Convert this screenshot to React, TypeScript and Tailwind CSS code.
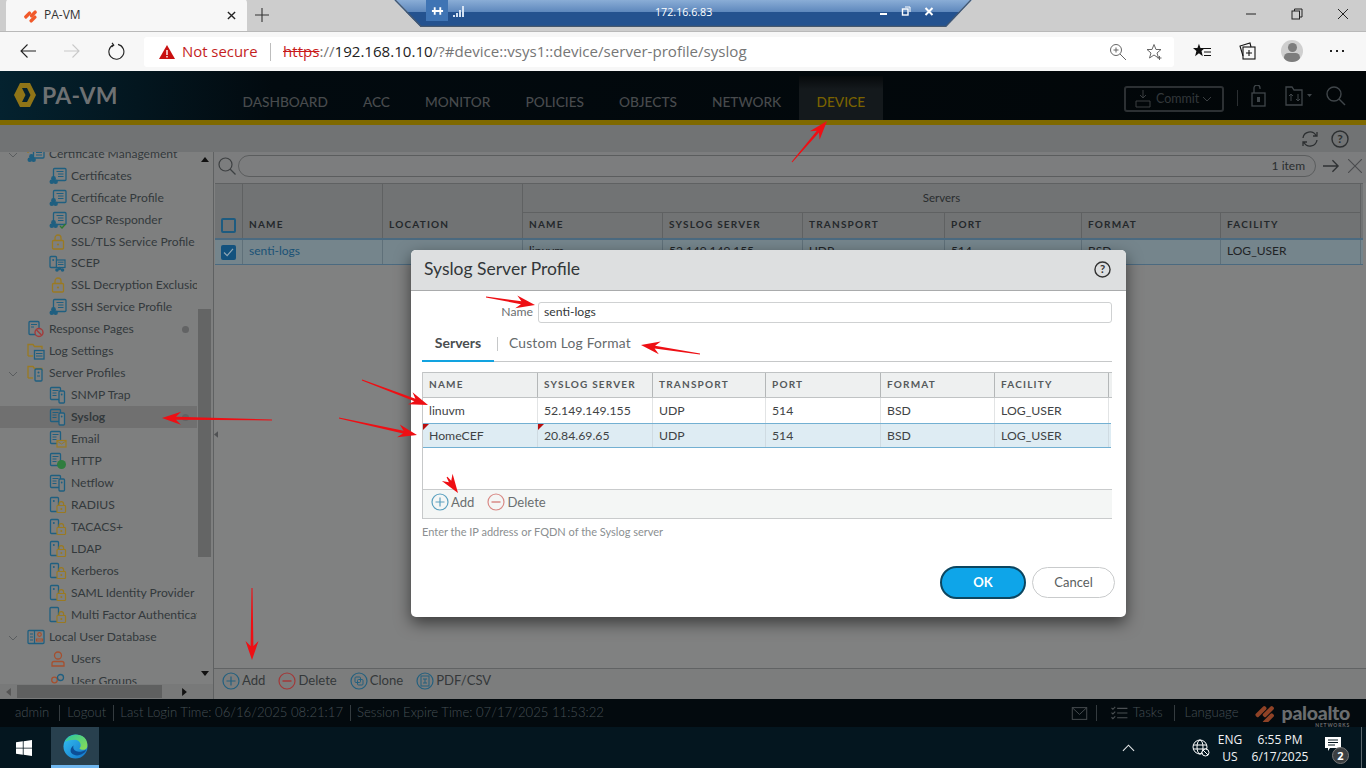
import React from "react";

const lato = "font-['Lato','Open_Sans',sans-serif]";
const segoe = "font-['Open_Sans','Noto_Sans',sans-serif]";

function Arrow({ x1, y1, x2, y2 }: { x1: number; y1: number; x2: number; y2: number }) {
  const a = Math.atan2(y2 - y1, x2 - x1);
  const ux = Math.cos(a), uy = Math.sin(a), nx = -uy, ny = ux;
  const L = 19, W = 6.5, N = 14;
  const b = (d: number, s: number) => `${x2 - ux * d + nx * s},${y2 - uy * d + ny * s}`;
  const t = (s: number) => `${x1 + nx * s},${y1 + ny * s}`;
  const pts = [t(0.5), b(N, 1.4), b(L, W), `${x2},${y2}`, b(L, -W), b(N, -1.4), t(-0.5)].join(" ");
  return <polygon points={pts} fill="#ee0f14" />;
}

const S = ({ c = "w-[18px] h-[18px]", children, vb = "0 0 18 18" }: { c?: string; children: React.ReactNode; vb?: string }) => (
  <svg viewBox={vb} className={`${c} shrink-0`} fill="none">{children}</svg>
);

const blue = "#1f5f80";
const gold = "#9a7a22";
const People = () => (
  <g fill={blue}>
    <circle cx="4.500" cy="11.500" r="2.400" /><circle cx="2.800" cy="14.800" r="2.300" /><circle cx="6.600" cy="14.800" r="2.300" />
  </g>
);
const CertIcon = ({ check }: { check?: boolean }) => (
  <S>
    <rect x="4.500" y="1.500" width="12.500" height="12" rx="1" stroke={blue} strokeWidth="1.300" fill="#7e8080" />
    <path d="M7.500 4.500h7M9 7h5.500M9 9.500h5.500" stroke={blue} strokeWidth="1.200" />
    <People />
    {check && <path d="M11 15l2 2 3.500-4" stroke="#2f7a2f" strokeWidth="1.400" />}
  </S>
);
const GroupCert = () => (
  <S>
    <path d="M1 8V3h5l1.500 1.500h5" stroke={gold} strokeWidth="1.300" />
    <rect x="6.500" y="5" width="10.500" height="8" rx="1" stroke={blue} strokeWidth="1.300" fill="#7e8080" />
    <path d="M9 7.500h6M9 10h6" stroke={blue} />
    <People />
  </S>
);
const LockIcon = () => (
  <S>
    <rect x="3.500" y="7.500" width="11" height="8.500" rx="1" stroke={gold} strokeWidth="1.300" />
    <path d="M6 7.500V5a3 3 0 0 1 6 0v2.500" stroke={gold} strokeWidth="1.300" />
    <circle cx="9" cy="11.500" r="1.100" fill={gold} />
  </S>
);
const ScepIcon = () => (
  <S>
    <rect x="1" y="1.500" width="6.500" height="11" rx="1" stroke={blue} strokeWidth="1.300" />
    <circle cx="4.200" cy="5" r="1" fill={blue} />
    <rect x="7.500" y="5" width="8.500" height="7.500" stroke={blue} strokeWidth="1.200" fill="#7e8080" />
    <path d="M9 7.200h5.500M9 9.500h5.500" stroke={blue} />
    <g fill={blue}><circle cx="10.500" cy="13.500" r="1.800" /><circle cx="13.500" cy="15" r="1.800" /><circle cx="8" cy="15" r="1.800" /></g>
  </S>
);
const ResponseIcon = () => (
  <S>
    <rect x="2" y="1.500" width="10" height="13" rx="1" stroke={blue} strokeWidth="1.300" />
    <path d="M4 4.500h6M4 7h3" stroke={blue} strokeWidth="1.200" />
    <circle cx="12" cy="12.500" r="4" stroke="#a33a3a" strokeWidth="1.400" fill="#7e8080" />
    <path d="M9.500 10l5 5" stroke="#a33a3a" strokeWidth="1.400" />
  </S>
);
const FolderDoc = ({ device }: { device?: boolean }) => (
  <S>
    <path d="M1 14V2.500h5l1.500 2H15V7" stroke={gold} strokeWidth="1.300" />
    <path d="M1 14h5" stroke={gold} strokeWidth="1.300" />
    {device ? (
      <>
        <rect x="8" y="5" width="7" height="12" rx="1" stroke={blue} strokeWidth="1.300" fill="#7e8080" />
        <circle cx="11.500" cy="8.500" r="1" fill={blue} />
        <path d="M10 12h3" stroke={blue} />
      </>
    ) : (
      <>
        <rect x="7.500" y="8.500" width="9.500" height="8.500" stroke={blue} strokeWidth="1.300" fill="#7e8080" />
        <path d="M9 11.500h6.500M9 14h6.500" stroke={blue} />
      </>
    )}
  </S>
);
const ServerDoc = ({ extra }: { extra?: "mail" | "globe" }) => (
  <S>
    <rect x="1.500" y="1.500" width="10" height="12" rx="1" stroke={blue} strokeWidth="1.300" />
    <path d="M3.500 4.500h6M3.500 7h4M3.500 9.500h4" stroke={blue} strokeWidth="1.100" />
    {!extra && (
      <>
        <rect x="10" y="5" width="5.500" height="12" rx="1" stroke={blue} strokeWidth="1.300" fill="#7e8080" />
        <circle cx="12.700" cy="8.500" r=".9" fill={blue} />
      </>
    )}
    {extra === "mail" && (
      <>
        <rect x="8" y="10.500" width="9" height="6.500" stroke={gold} strokeWidth="1.200" fill="#7e8080" />
        <path d="M8 11l4.500 3 4.500-3" stroke={gold} />
      </>
    )}
    {extra === "globe" && <circle cx="12.500" cy="12.500" r="4.500" fill="#2f7d3f" />}
  </S>
);
const ServerLock = ({ phone }: { phone?: boolean }) => (
  <S>
    <rect x={phone ? 1 : 1.500} y="1.500" width={phone ? 8.500 : 8} height="14" rx="1" stroke={blue} strokeWidth="1.300" />
    {!phone && <circle cx="4.800" cy="5" r="1" fill={blue} />}
    <rect x="8" y="9.500" width="8.500" height="7" rx=".8" stroke={gold} strokeWidth="1.200" fill="#7e8080" />
    <path d="M10 9.500V8a2.300 2.300 0 0 1 4.600 0v1.500" stroke={gold} strokeWidth="1.200" />
    <circle cx="12.300" cy="13" r="1" fill={gold} />
  </S>
);
const DbIcon = () => (
  <S>
    <rect x="1" y="2.500" width="16" height="13" rx="1" stroke={blue} strokeWidth="1.300" />
    <path d="M7.500 2.500v13M3 6h3M3 9h3M3 12h3" stroke={blue} strokeWidth="1.200" />
    <circle cx="12.500" cy="6.500" r="1.800" stroke="#a5502f" strokeWidth="1.200" />
    <path d="M9.500 13v-2h6v2z" stroke="#a5502f" strokeWidth="1.200" />
  </S>
);
const UserIcon = () => (
  <S>
    <circle cx="9" cy="5.500" r="3.500" stroke="#a5502f" strokeWidth="1.300" />
    <path d="M3 16v-2.500c0-1.300 1-2 2-2h8c1 0 2 .7 2 2V16z" stroke="#a5502f" strokeWidth="1.300" />
  </S>
);
const GroupIcon = () => (
  <S>
    <circle cx="5.500" cy="8" r="2.800" stroke="#a5502f" strokeWidth="1.300" />
    <circle cx="11.500" cy="5.500" r="3" stroke={blue} strokeWidth="1.300" />
  </S>
);

type Row = { t: string; i: React.ReactNode; top?: boolean; open?: boolean; sel?: boolean; dot?: boolean; short?: boolean };
const rows: Row[] = [
  { t: "Certificate Management", i: <GroupCert />, top: true, open: true },
  { t: "Certificates", i: <CertIcon /> },
  { t: "Certificate Profile", i: <CertIcon /> },
  { t: "OCSP Responder", i: <CertIcon check /> },
  { t: "SSL/TLS Service Profile", i: <LockIcon /> },
  { t: "SCEP", i: <ScepIcon />, short: true },
  { t: "SSL Decryption Exclusion", i: <LockIcon /> },
  { t: "SSH Service Profile", i: <CertIcon /> },
  { t: "Response Pages", i: <ResponseIcon />, top: true, dot: true },
  { t: "Log Settings", i: <FolderDoc />, top: true },
  { t: "Server Profiles", i: <FolderDoc device />, top: true, open: true },
  { t: "SNMP Trap", i: <ServerDoc /> },
  { t: "Syslog", i: <ServerDoc />, sel: true, dot: true },
  { t: "Email", i: <ServerDoc extra="mail" /> },
  { t: "HTTP", i: <ServerDoc extra="globe" /> },
  { t: "Netflow", i: <ServerDoc /> },
  { t: "RADIUS", i: <ServerLock /> },
  { t: "TACACS+", i: <ServerLock /> },
  { t: "LDAP", i: <ServerLock /> },
  { t: "Kerberos", i: <ServerLock /> },
  { t: "SAML Identity Provider", i: <ServerLock /> },
  { t: "Multi Factor Authentication", i: <ServerLock phone /> },
  { t: "Local User Database", i: <DbIcon />, top: true, open: true },
  { t: "Users", i: <UserIcon /> },
  { t: "User Groups", i: <GroupIcon /> },
];

function TreeRow({ r }: { r: Row }) {
  return (
    <div className={`relative ${r.short ? "h-[21px]" : "h-[22px]"} flex items-center overflow-hidden whitespace-nowrap text-[12.100px] text-[#33393c] ${r.sel ? "bg-[#707070] font-bold text-[#1f2326]" : ""} ${r.top ? "pl-[27px]" : "pl-[49px]"}`}>
      {r.open && (
        <svg viewBox="0 0 10 6" className="absolute left-[8px] top-[9px] w-[10px] h-[6px]" fill="none"><path d="M1 1l4 4 4-4" stroke="#5a5d5f" /></svg>
      )}
      {r.i}
      <span className="ml-[4px]">{r.t}</span>
      {r.dot && <span className="absolute left-[182px] top-[8px] w-[7px] h-[7px] rounded-full bg-[#626364]" />}
    </div>
  );
}

const mainCols = "grid grid-cols-[28px_140px_140px_140px_140px_142px_137px_139px_140px]";
const modalCols = "grid grid-cols-[115px_115px_113px_115px_114px_114px]";
const thMain = "h-[25px] flex items-center pb-[2px] pl-[6px] text-[10px] font-bold tracking-[1.200px] text-[#24282b] border-r border-[#5f6162]";
const tdMain = "h-[24px] flex items-center pb-[2px] pl-[6px] text-[12px] text-[#1f2326] border-r border-[#5f7079]";

function BarBtn({ kind, label, dim }: { kind: "add" | "del" | "clone" | "pdf"; label: string; dim?: boolean }) {
  const col = kind === "del" ? (dim ? "#a33838" : "#d98a86") : (dim ? "#23607f" : "#5aa0bf");
  return (
    <div className="flex items-center gap-[2px]">
      <svg viewBox="0 0 18 18" className="w-[18px] h-[18px]" fill="none">
        <circle cx="9" cy="9" r="8" stroke={col} strokeWidth="1.200" />
        {kind === "add" && <path d="M9 4.500v9M4.500 9h9" stroke={col} strokeWidth="1.200" />}
        {kind === "del" && <path d="M4.500 9h9" stroke={col} strokeWidth="1.500" />}
        {kind === "clone" && <><rect x="5" y="5" width="5.500" height="5.500" rx="1" stroke={col} /><rect x="7.500" y="7.500" width="5.500" height="5.500" rx="1" stroke={col} /></>}
        {kind === "pdf" && <><rect x="5" y="4" width="8" height="10" stroke={col} /><path d="M7 7h4M7 11h4M9 7v4" stroke={col} /></>}
      </svg>
      <span>{label}</span>
    </div>
  );
}

const Sep = () => <span className="inline-block align-middle w-px h-[16px] bg-[#343b3f]" />;

export default function App() {
  return (
    <div className={`relative w-[1366px] h-[768px] overflow-hidden flex flex-col bg-[#808181] ${segoe}`}>
      {/* tab strip */}
      <div className="h-[32px] shrink-0 bg-[#cdcdcd] flex items-end pl-[6px] border-b border-[#b9b9b9]">
        <div className="w-[241px] h-[32px] bg-[#f7f7f7] rounded-t-[4px] flex items-center pl-[18px] pr-[11px]">
          <svg viewBox="0 0 16 16" className="w-[15px] h-[15px]"><g fill="#f1592a" transform="rotate(-45 8 8)"><rect x="1" y="3" width="9" height="3.500" rx="1.500" /><rect x="6" y="6.500" width="9" height="3.500" rx="1.500" /><rect x="2" y="10" width="9" height="3.500" rx="1.500" /></g></svg>
          <span className="ml-[5px] text-[12px] text-[#333] flex-1">PA-VM</span>
          <svg viewBox="0 0 10 10" className="w-[9px] h-[9px]" fill="none"><path d="M1 1l8 8M9 1l-8 8" stroke="#222" strokeWidth="1.500" /></svg>
        </div>
        <svg viewBox="0 0 14 14" className="ml-[8px] mb-[9px] w-[14px] h-[14px]" fill="none"><path d="M7 0v14M0 7h14" stroke="#333" strokeWidth="1.100" /></svg>
        <div className="flex-1" />
        <div className="flex mb-[10px] mr-[16px] gap-[32px] items-center">
          <svg viewBox="0 0 14 14" className="w-[14px] h-[14px]" fill="none"><path d="M2 7h10" stroke="#222" /></svg>
          <svg viewBox="0 0 14 14" className="w-[14px] h-[14px]" fill="none"><rect x="2" y="4" width="7.500" height="8" stroke="#222" /><path d="M4.500 4V2h7.500v8H9.500" stroke="#222" /></svg>
          <svg viewBox="0 0 14 14" className="w-[14px] h-[14px]" fill="none"><path d="M2 2l10 10M12 2L2 12" stroke="#222" /></svg>
        </div>
      </div>

      {/* RDP connection bar */}
      <div className="absolute left-[394px] top-0 w-[578px] h-[27px] [clip-path:polygon(0_0,100%_0,95.500%_100%,4.600%_100%)] bg-[linear-gradient(#8aadd6_0%,#5d87bc_45%,#24528f_46%,#24528f_100%)] text-white text-[11px]">
        <svg viewBox="0 0 578 27" className="absolute inset-0 w-[578px] h-[27px]" fill="none"><path d="M1 0l26 26.500h525L577 0" stroke="#46586e" strokeWidth="1.500" /></svg>
        <div className="absolute left-[32px] top-0 w-[22px] h-[21px] bg-[#3f74b4] flex items-center justify-center">
          <svg viewBox="0 0 14 10" className="w-[13px] h-[10px]" fill="none"><path d="M1 5h12M4 1v8M10 1v8" stroke="#fff" strokeWidth="2" /></svg>
        </div>
        <svg viewBox="0 0 12 12" className="absolute left-[59px] top-[5px] w-[12px] h-[12px]"><path d="M0 10h2v2H0zM3 8h2v4H3zM6 5h2v7H6zM9 1h2v11H9z" fill="#d6e3f3" /></svg>
        <span className="absolute left-[261px] top-[4px] text-[10.700px] whitespace-nowrap">172.16.6.83</span>
        <svg viewBox="0 0 54 14" className="absolute left-[486px] top-[3px] w-[54px] h-[14px]" fill="none"><path d="M0 11h7" stroke="#fff" strokeWidth="2" /><rect x="22.500" y="6" width="5.500" height="6" stroke="#fff" strokeWidth="1.400" /><path d="M25 4h5v5" stroke="#fff" /><path d="M45.500 5l7 7M52.500 5l-7 7" stroke="#fff" strokeWidth="2" /></svg>
      </div>

      {/* address bar */}
      <div className="h-[39px] shrink-0 bg-[#f7f7f7] flex items-center relative">
        <svg viewBox="0 0 18 18" className="absolute left-[19px] top-[10px] w-[18px] h-[18px]" fill="none"><path d="M17 9H2M8.500 2.500L2 9l6.500 6.500" stroke="#222" strokeWidth="1.100" /></svg>
        <svg viewBox="0 0 18 18" className="absolute left-[63px] top-[10px] w-[18px] h-[18px]" fill="none"><path d="M1 9h15M9.500 2.500L16 9l-6.500 6.500" stroke="#c9c9c9" strokeWidth="1.100" /></svg>
        <svg viewBox="0 0 18 18" className="absolute left-[107px] top-[10px] w-[18px] h-[18px]" fill="none"><path d="M6.500 2.800A7.500 7.500 0 1 0 11 2.400M5 .8l1.800 2.300L4.500 5" stroke="#222" strokeWidth="1.100" /></svg>

        <div className="ml-[144px] w-[1030px] h-[30px] bg-white rounded-[3px] flex items-center pl-[15px] pr-[10px] whitespace-nowrap">
          <svg viewBox="0 0 16 14" className="w-[16px] h-[14px]"><path d="M8 0l8 14H0z" fill="#c80f0f" /><path d="M7.300 5h1.400v5H7.300zM7.300 11h1.400v1.500H7.300z" fill="#fff" /></svg>
          <span className="ml-[7px] text-[14.900px] text-[#c41e1e] w-[76px]">Not secure</span>
          <span className="ml-[12px] w-px h-[18px] bg-[#bdbdbd]" />
          <span className="ml-[12px] text-[15.100px]">
            <span className="text-[#c81a1a] line-through">https</span><span className="text-[#767676]">://</span><span className="text-[#222]">192.168.10.10</span><span className="text-[#767676]">/?#device::vsys1::device/server-profile/syslog</span>
          </span>
          <span className="flex-1" />
          <svg viewBox="0 0 18 18" className="w-[18px] h-[18px]" fill="none"><circle cx="7" cy="7" r="5.500" stroke="#666" /><path d="M11 11l6 6M7 4.500v5M4.500 7h5" stroke="#666" /></svg>
          <svg viewBox="0 0 18 18" className="ml-[19px] w-[18px] h-[18px]" fill="none"><path d="M8 1.500l2 5h5l-4 3.500 1.500 5L8 12l-4.500 3 1.500-5-4-3.500h5z" stroke="#666" /><path d="M13.500 13v4M11.500 15h4" stroke="#666" /></svg>
        </div>
        <svg viewBox="0 0 18 18" className="absolute left-[1193px] top-[10px] w-[18px] h-[18px]" fill="none"><path d="M7 1l1.800 5H14l-4 3.500 1.500 6L7 12l-4.500 3.500L4 9.500 0 6h5.200z" fill="#111" transform="translate(0 1) scale(.85)" /><path d="M11 6.500h7M11 10h7M11 13.500h7" stroke="#111" /></svg>
        <svg viewBox="0 0 18 18" className="absolute left-[1238px] top-[10px] w-[18px] h-[18px]" fill="none"><rect x="5" y="5" width="12" height="12" stroke="#111" strokeWidth="1.100" /><path d="M5 14L2 4l10-3 1 4M11 8v6M8 11h6" stroke="#111" strokeWidth="1.100" /></svg>
        <div className="absolute left-[1281px] top-[8px] w-[22px] h-[22px] rounded-full bg-[#cfcfcf] overflow-hidden flex flex-col items-center pt-[3px]">
          <span className="w-[9px] h-[9px] rounded-full bg-[#7d7d7d]" />
          <span className="mt-[1px] w-[16px] h-[10px] rounded-full bg-[#7d7d7d]" />
        </div>
        <span className="absolute left-[1330px] top-[18px] flex gap-[4px]"><i className="w-[2px] h-[2px] bg-[#222]" /><i className="w-[2px] h-[2px] bg-[#222]" /><i className="w-[2px] h-[2px] bg-[#222]" /></span>
      </div>

      {/* PAN header */}
      <div className={`h-[49px] shrink-0 bg-[linear-gradient(90deg,#04222f_0%,#020a0f_20%,#020608_100%)] relative flex items-end ${lato}`}>
        <svg viewBox="0 0 22 24" className="absolute left-[14px] top-[12px] w-[22px] h-[24px]"><path fillRule="evenodd" d="M6 0h10l6 12-6 12H6L0 12zM8 5l3.500 7L8 19h5l3.500-7L13 5z" fill="#8f7417" /></svg>
        <span className="absolute left-[42px] top-[7px] text-[23px] font-bold text-[#6e7173] tracking-[0.2px]">PA-VM</span>
        <nav className="ml-[225px] flex text-[13.700px] font-medium text-[#484b4d]">
          {["DASHBOARD", "ACC", "MONITOR", "POLICIES", "OBJECTS", "NETWORK"].map((t) => (
            <span key={t} className="px-[17.500px] h-[35px] flex items-center self-end">{t}</span>
          ))}
          <span className="w-[84px] h-[44px] pt-[9px] bg-[linear-gradient(#06090b,#14191c_30%)] text-[#7a6200] flex items-center justify-center">DEVICE</span>
        </nav>
        <div className="absolute left-[1124px] top-[15px] w-[100px] h-[26px] rounded-[3px] border-2 border-[#2c3033] flex items-center pl-[9px] text-[12.500px] text-[#33383b]">
          <svg viewBox="0 0 16 18" className="w-[16px] h-[18px]" fill="none"><path d="M8 0v8M5 5l3 3 3-3M1 11h14v6H1z" stroke="#3a3e41" /></svg>
          <span className="ml-[5px]">Commit</span>
          <svg viewBox="0 0 8 5" className="ml-[4px] w-[8px] h-[5px]" fill="none"><path d="M0 0l4 4 4-4" stroke="#3a3e41" /></svg>
        </div>
        <span className="absolute left-[1237px] top-[19px] w-px h-[16px] bg-[#2b2f32]" />
        <svg viewBox="0 0 16 22" className="absolute left-[1251px] top-[14px] w-[16px] h-[22px]" fill="none"><rect x="1" y="8" width="13" height="13" stroke="#40464a" strokeWidth="1.300" /><path d="M3 8V3a3 3 0 0 1 6 0v1" stroke="#40464a" strokeWidth="1.300" /><rect x="6" y="12" width="3" height="5" fill="#40464a" /></svg>
        <svg viewBox="0 0 28 20" className="absolute left-[1285px] top-[15px] w-[28px] h-[20px]" fill="none"><path d="M1 19V1h6l2 3h8v15z" stroke="#40464a" strokeWidth="1.300" /><path d="M6 8v7M13 8v7M4 10l2-2 2 2M11 13l2 2 2-2" stroke="#40464a" /><path d="M22 8l2.500 3L27 8z" fill="#40464a" /></svg>
        <svg viewBox="0 0 20 20" className="absolute left-[1326px] top-[15px] w-[20px] h-[20px]" fill="none"><circle cx="8" cy="8" r="7" stroke="#40464a" strokeWidth="1.400" /><path d="M13 13l6 6" stroke="#40464a" strokeWidth="1.400" /></svg>
      </div>
      <div className="h-[5px] shrink-0 bg-[#7f6900]" />

      {/* toolbar */}
      <div className="h-[27px] shrink-0 bg-[#717374] flex items-center justify-end pr-[17px] gap-[12px]">
        <svg viewBox="0 0 18 18" className="w-[18px] h-[18px]" fill="none"><path d="M2 8a7 7 0 0 1 13-2.500M16 10a7 7 0 0 1-13 2.500M12 6h4V2M6 12H2v4" stroke="#2c2f31" strokeWidth="1.300" /></svg>
        <svg viewBox="0 0 18 18" className="w-[18px] h-[18px]" fill="none"><circle cx="9" cy="9" r="8" stroke="#2c2f31" strokeWidth="1.400" /><text x="9" y="13.200" textAnchor="middle" fontSize="12" fontWeight="700" fill="#2c2f31" fontFamily="Lato">?</text></svg>
      </div>

      {/* body */}
      <div className={`flex-1 min-h-0 flex ${lato}`}>
        {/* sidebar */}
        <aside className="w-[214px] shrink-0 flex flex-col bg-[#7e7f7f] border-r border-[#5f6162]">
          <div className="flex-1 min-h-0 flex">
            <div className="w-[197px] overflow-hidden">
              <div className="-mt-[9px]">
                {rows.map((r) => <TreeRow key={r.t} r={r} />)}
              </div>
            </div>
            <div className="w-[16px] flex flex-col items-center relative">
              <svg viewBox="0 0 10 6" className="mt-[5px] w-[8px] h-[5px]"><path d="M0 6l5-6 5 6z" fill="#111" /></svg>
              <div className="mt-[147px] ml-[-1px] w-[13px] h-[248px] bg-[#646565]" />
              <div className="flex-1" />
              <svg viewBox="0 0 10 6" className="mb-[8px] w-[8px] h-[5px]"><path d="M0 0l5 6 5-6z" fill="#111" /></svg>
            </div>
          </div>
          <div className="h-[15px] shrink-0 bg-[#787979] flex items-center pl-[6px] relative">
            <svg viewBox="0 0 6 10" className="w-[5px] h-[8px]"><path d="M6 0L0 5l6 5z" fill="#555" /></svg>
            <div className="ml-[6px] w-[145px] h-[13px] bg-[#5f6060]" />
            <svg viewBox="0 0 6 10" className="ml-[20px] w-[5px] h-[8px]"><path d="M0 0l6 5-6 5z" fill="#111" /></svg>
          </div>
        </aside>

        {/* content */}
        <main className="flex-1 min-w-0 flex flex-col relative">
          <svg viewBox="0 0 5 8" className="absolute left-[0px] top-[279px] w-[4px] h-[7px]"><path d="M5 0L0 4l5 4z" fill="#4f5153" /></svg>
          <div className="h-[31px] shrink-0 flex items-start pt-[3px] pl-[4px] bg-[#7c7d7e]">
            <svg viewBox="0 0 18 18" className="mt-[2px] w-[18px] h-[18px]" fill="none"><circle cx="7.500" cy="7.500" r="6.500" stroke="#3d4042" strokeWidth="1.200" /><path d="M12 12l5.500 5.500" stroke="#3d4042" strokeWidth="1.200" /></svg>
            <div className="ml-[2px] w-[1078px] h-[22px] rounded-full border border-[#5b5d5e] flex items-center justify-end pr-[10px] text-[12px] text-[#2a2d2f]">1 item</div>
            <svg viewBox="0 0 18 14" className="ml-[7px] mt-[4px] w-[17px] h-[14px]" fill="none"><path d="M0 7h16M10 1l6 6-6 6" stroke="#2f3234" strokeWidth="1.400" /></svg>
            <svg viewBox="0 0 14 14" className="ml-[8px] mt-[4px] w-[14px] h-[14px]" fill="none"><path d="M0 0l14 14M14 0L0 14" stroke="#4a4c4e" strokeWidth="1.100" /></svg>
          </div>

          {/* table */}
          <div className="w-[1148px] ml-[1px] border-t border-[#5f6162] bg-[#717374]">
            <div className={mainCols}>
              <div className="h-[29px] border-r border-[#5f6162]" />
              <div className="h-[29px] border-r border-[#5f6162]" />
              <div className="h-[29px] border-r border-[#5f6162]" />
              <div className="col-span-6 h-[29px] border-b border-r border-[#5f6162] flex items-center justify-center text-[11.500px] text-[#2a2d2f]">Servers</div>
              <div className="h-[25px] border-r border-[#5f6162] flex items-center justify-center">
                <span className="w-[15px] h-[15px] border-2 border-[#1d5b80] rounded-[2px]" />
              </div>
              {["NAME", "LOCATION", "NAME", "SYSLOG SERVER", "TRANSPORT", "PORT", "FORMAT", "FACILITY"].map((t, i) => (
                <div key={i} className={thMain}>{t}</div>
              ))}
            </div>
            <div className={`${mainCols} border-t-2 border-b border-t-[#4b6a80] border-b-[#4b6a80] bg-[#75858c]`}>
              <div className="h-[24px] flex items-center justify-center border-r border-[#5f7079]">
                <span className="w-[15px] h-[15px] rounded-[2px] bg-[#13527e] flex items-center justify-center">
                  <svg viewBox="0 0 12 10" className="w-[11px] h-[9px]" fill="none"><path d="M1 5l3.500 3.500L11 1" stroke="#8fa6b5" strokeWidth="1.300" /></svg>
                </span>
              </div>
              <div className={`${tdMain} !text-[#1a5276]`}>senti-logs</div>
              <div className={tdMain} />
              <div className={tdMain}>linuvm</div>
              <div className={tdMain}>52.149.149.155</div>
              <div className={tdMain}>UDP</div>
              <div className={tdMain}>514</div>
              <div className={tdMain}>BSD</div>
              <div className={tdMain}>LOG_USER</div>
            </div>
          </div>

          <div className="flex-1" />
          {/* bottom bar */}
          <div className="h-[31px] shrink-0 border-t border-[#616364] bg-[#7c7d7d] flex items-center pb-[6px] pl-[8px] gap-[13px] text-[13.100px] text-[#34383a]">
            <BarBtn kind="add" label="Add" dim />
            <BarBtn kind="del" label="Delete" dim />
            <BarBtn kind="clone" label="Clone" dim />
            <BarBtn kind="pdf" label="PDF/CSV" dim />
          </div>
        </main>
      </div>

      {/* status bar */}
      <footer className={`h-[28px] shrink-0 bg-[#030a0e] flex items-center pl-[15px] text-[13.150px] font-light text-[#465055] whitespace-nowrap relative ${lato}`}>
        <span>admin</span>
        <span className="ml-[10px] flex"><Sep /></span>
        <span className="ml-[7px]">Logout</span>
        <span className="ml-[7px] flex"><Sep /></span>
        <span className="ml-[6px]">Last Login Time: 06/16/2025 08:21:17</span>
        <span className="ml-[7px] flex"><Sep /></span>
        <span className="ml-[6px]">Session Expire Time: 07/17/2025 11:53:22</span>
        <span className="flex-1" />
        <svg viewBox="0 0 17 14" className="w-[17px] h-[13px]" fill="none"><rect x=".7" y=".7" width="15.600" height="12.600" stroke="#4b5053" /><path d="M1 1l7.500 7L16 1" stroke="#4b5053" /></svg>
        <span className="ml-[8px] flex"><Sep /></span>
        <svg viewBox="0 0 18 16" className="ml-[13px] w-[18px] h-[15px]" fill="none"><path d="M1 2l1.500 1.500L5 1M1 7l1.500 1.500L5 6M1 12l1.500 1.500L5 11M7 2.500h11M7 7.500h11M7 12.500h11" stroke="#4b5053" strokeWidth="1.200" /></svg>
        <span className="ml-[5px]">Tasks</span>
        <span className="ml-[11px] flex"><Sep /></span>
        <span className="ml-[10px]">Language</span>
        <svg viewBox="0 0 24 16" className="ml-[15px] w-[25px] h-[17px]"><g fill="#8f4226" transform="rotate(-45 12 8)"><rect x="3" y="1" width="13" height="4" rx="1.500" /><rect x="8" y="6" width="13" height="4" rx="1.500" /><rect x="3" y="11" width="13" height="4" rx="1.500" /></g></svg>
        <span className="ml-[3px] mr-[16px] -mt-[1px] relative text-[19.500px] font-black tracking-[-0.3px] leading-none text-[#6a6d6f]">
          paloalto
          <span className="absolute right-0 -bottom-[6px] text-[5px] tracking-[0.8px] font-bold">NETWORKS</span>
        </span>
      </footer>

      {/* taskbar */}
      <div className="h-[41px] shrink-0 bg-[#04161f] flex items-center relative text-white">
        <svg viewBox="0 0 16 16" className="ml-[16px] w-[16px] h-[16px]"><path d="M0 2.300l6.800-1v6.400H0zM7.600 1.200L16 0v7.700H7.600zM0 8.400h6.800v6.300l-6.800-1zM7.600 8.400H16V16l-8.400-1.200z" fill="#fff" /></svg>
        <div className="ml-[19px] w-[48px] h-[41px] bg-[#28404e] border-b-[3px] border-[#6fb6ee] flex items-center justify-center">
          <svg viewBox="0 0 26 26" className="w-[25px] h-[25px]">
            <defs>
              <linearGradient id="e1" x1="0" y1="0" x2="1" y2="1"><stop offset="0" stopColor="#35c1f1" /><stop offset="1" stopColor="#1173c9" /></linearGradient>
              <linearGradient id="e2" x1="0" y1="0" x2="1" y2="1"><stop offset="0" stopColor="#28c8a0" /><stop offset="1" stopColor="#8fdc50" /></linearGradient>
            </defs>
            <circle cx="13" cy="13" r="12.500" fill="url(#e1)" />
            <path d="M2 8C5 1 14-1 20 2c5 3 6 8 5 12-1 3-6 3-8 1 3-3 1-9-5-9-4 0-8 1-10 2z" fill="url(#e2)" />
            <path d="M9 20c3 3 8 3 12 0 2-1 3-3 3-4-3 2-7 3-10 2-3-1-4-4-3-6-3 2-4 6-2 8z" fill="#0c4e97" />
          </svg>
        </div>
        <svg viewBox="0 0 14 8" className="absolute left-[1122px] top-[17px] w-[13px] h-[8px]" fill="none"><path d="M1 7l6-6 6 6" stroke="#e6e8e9" strokeWidth="1.200" /></svg>
        <svg viewBox="0 0 18 18" className="absolute left-[1192px] top-[12px] w-[18px] h-[18px]" fill="none"><circle cx="8" cy="8" r="7" stroke="#fff" /><ellipse cx="8" cy="8" rx="3" ry="7" stroke="#fff" /><path d="M1 6h14M1 10h14" stroke="#fff" /><circle cx="13.500" cy="13.500" r="3.500" fill="#04161f" stroke="#fff" /><path d="M11 11l5 5" stroke="#fff" /></svg>
        <div className="absolute left-[1216px] top-[4px] w-[28px] text-center text-[12px] leading-[17px] text-[#f2f3f4]">ENG<br />US</div>
        <div className="absolute left-[1250px] top-[4px] w-[60px] text-center text-[12px] leading-[17px] text-[#f2f3f4]">6:55 PM<br />6/17/2025</div>
        <svg viewBox="0 0 16 14" className="absolute left-[1325px] top-[10px] w-[16px] h-[14px]"><path d="M0 0h16v11H5l-2 3v-3H0z" fill="#fff" /><path d="M3 3h10M3 5.500h10M3 8h7" stroke="#04161f" /></svg>
        <span className="absolute left-[1332px] top-[20px] w-[17px] h-[17px] rounded-full bg-[#3b3f42] border border-[#777] flex items-center justify-center text-[11px] font-bold leading-none">2</span>
        <span className="absolute left-[1361px] top-0 w-px h-[41px] bg-[#5b676d]" />
      </div>

      {/* Modal dialog */}
      <div className={`absolute left-[411px] top-[250px] w-[715px] h-[367px] rounded-[5px] bg-white overflow-hidden shadow-[0_6px_16px_rgba(0,0,0,0.55)] flex flex-col ${lato}`}>
        <div className="h-[41px] shrink-0 bg-[#dddfe0] border-b border-[#a9abac] flex items-center justify-between pb-[2px] pl-[13px] pr-[15px] text-[17.500px] text-[#333739]">
          <span>Syslog Server Profile</span>
          <svg viewBox="0 0 18 18" className="w-[17px] h-[17px]" fill="none"><circle cx="9" cy="9" r="8" stroke="#333" strokeWidth="1.500" /><text x="9" y="13.200" textAnchor="middle" fontSize="12" fontWeight="700" fill="#333" fontFamily="Lato">?</text></svg>
        </div>
        <div className="h-[21px] mt-[11px] shrink-0 flex items-center justify-end pr-[14px] text-[12.200px]">
          <span className="text-[#6a6e70] mr-[5px]">Name</span>
          <div className="w-[574px] h-[21px] border border-[#cfd1d2] rounded-[3px] pl-[5px] flex items-center text-[#333739]">senti-logs</div>
        </div>
        <div className="mx-[11px] mt-[8px] w-[690px] h-[31px] shrink-0 border-b border-[#c6c8c9] flex items-start relative">
          <div className="w-[72px] h-[31px] pb-[7px] border-b-2 border-[#12a3e0] flex items-center justify-center text-[14px] font-bold text-[#4a4e50]">Servers</div>
          <span className="absolute left-[75px] top-[6px] w-px h-[14px] bg-[#c6c8c9]" />
          <span className="ml-[15px] h-[24px] flex items-center text-[13.800px] text-[#666a6c] tracking-[0.2px]">Custom Log Format</span>
        </div>
        <div className="ml-[11px] mt-[10px] w-[690px] shrink-0 border-l border-[#c6c8c9] bg-white">
          <div className="bg-[#eef0f0] border-t border-b border-[#c0c3c4] h-[26px]">
            <div className={modalCols}>
              {["NAME", "SYSLOG SERVER", "TRANSPORT", "PORT", "FORMAT", "FACILITY"].map((t) => (
                <div key={t} className="h-[24px] pb-[2px] flex items-center pl-[6px] text-[10px] font-bold tracking-[1.200px] text-[#55595b] border-r border-[#b4b7b8]">{t}</div>
              ))}
            </div>
          </div>
          <div className={modalCols}>
            {["linuvm", "52.149.149.155", "UDP", "514", "BSD", "LOG_USER"].map((t) => (
              <div key={t} className="h-[25px] pt-[2px] flex items-center pl-[6px] text-[12.250px] text-[#3f4345] border-r border-[#e2e4e5]">{t}</div>
            ))}
          </div>
          <div className={`${modalCols} w-[688px] bg-[#deecf3] border-t border-b border-[#73b0d2]`}>
            {["HomeCEF", "20.84.69.65", "UDP", "514", "BSD", "LOG_USER"].map((t, i) => (
              <div key={t} className="relative h-[23px] pt-[2px] flex items-center pl-[6px] text-[12.250px] text-[#3f4345] border-r border-[#cfdbe2]">
                {i < 2 && <span className="absolute left-0 top-0 w-0 h-0 border-t-[6px] border-r-[6px] border-t-[#b80f0f] border-r-transparent" />}
                {t}
              </div>
            ))}
          </div>
          <div className="h-[41px]" />
          <div className="h-[30px] pb-[3px] bg-[#f4f6f5] border-t border-b border-[#c9cbcc] flex items-center pl-[8px] gap-[13px] text-[13.100px] text-[#6a6e70]">
            <BarBtn kind="add" label="Add" />
            <BarBtn kind="del" label="Delete" />
          </div>
        </div>
        <div className="ml-[11px] mt-[5px] text-[11px] text-[#8b8f91]">Enter the IP address or FQDN of the Syslog server</div>
        <div className="flex-1" />
        <div className="flex justify-end items-center gap-[6px] pr-[11px] pb-[18px]">
          <div className="w-[86px] h-[33px] rounded-full bg-[#0ea5e9] border-2 border-[#0c4660] flex items-center justify-center text-[13px] font-bold text-white">OK</div>
          <div className="w-[83px] h-[31px] rounded-full bg-white border border-[#c9cbcc] flex items-center justify-center text-[13px] text-[#5a5e60]">Cancel</div>
        </div>
      </div>

      {/* annotation arrows */}
      <svg viewBox="0 0 1366 768" className="absolute inset-0 w-[1366px] h-[768px] pointer-events-none">
        <Arrow x1={792} y1={162} x2={827} y2={121} />
        <Arrow x1={486} y1={297} x2={535} y2={305} />
        <Arrow x1={700} y1={354} x2={641} y2={345} />
        <Arrow x1={362} y1={380} x2={428} y2={405} />
        <Arrow x1={339} y1={418} x2={417} y2={435} />
        <Arrow x1={272} y1={420} x2={162} y2={418} />
        <Arrow x1={447} y1={477} x2={458} y2={493} />
        <Arrow x1={252} y1={588} x2={252} y2={660} />
      </svg>
    </div>
  );
}
